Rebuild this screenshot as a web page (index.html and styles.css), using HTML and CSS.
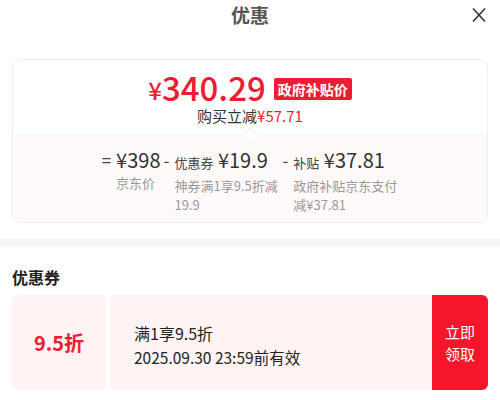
FILE: index.html
```html
<!DOCTYPE html>
<html lang="zh-CN">
<head>
  <meta charset="UTF-8">
  <meta name="viewport" content="width=device-width, initial-scale=1.0">
  <title>优惠</title>
  <link rel="stylesheet" href="styles.css">
</head>
<body>
  <header class="top-bar">
    <h1>优惠</h1>
    <svg class="close" width="16" height="16" viewBox="0 0 16 16">
      <path d="M2 1.5 L14 14.5 M14 1.5 L2 14.5" stroke="#333" stroke-width="1.6" fill="none"/>
    </svg>
  </header>

  <div class="price-card">
    <div class="price-main">
      <div class="price-line">
        <span class="yen">¥</span><span class="price">340.29</span>
        <span class="badge">政府补贴价</span>
      </div>
      <div class="save">购买立减<span class="red">¥57.71</span></div>
    </div>
    <div class="price-detail">
      <div class="col">
        <span class="op">=</span>
        <div class="col-body">
          <div class="amount">¥398</div>
          <div class="label">京东价</div>
        </div>
      </div>
      <div class="col">
        <span class="op">-</span>
        <div class="col-body wide">
          <div class="amount"><small>优惠券</small> ¥19.9</div>
          <div class="label">神券满1享9.5折减19.9</div>
        </div>
      </div>
      <div class="col">
        <span class="op">-</span>
        <div class="col-body wide">
          <div class="amount"><small>补贴</small> ¥37.81</div>
          <div class="label">政府补贴京东支付减¥37.81</div>
        </div>
      </div>
    </div>
  </div>

  <div class="band"></div>

  <section class="coupons">
    <h2>优惠券</h2>
    <div class="coupon">
      <div class="coupon-left">9.5折</div>
      <div class="coupon-main">
        <div class="coupon-title">满1享9.5折</div>
        <div class="coupon-date">2025.09.30 23:59前有效</div>
      </div>
      <button class="coupon-btn">立即<br>领取</button>
    </div>
  </section>
</body>
</html>
```

FILE: styles.css
```css
body {
  margin: 0;
  font-family: "Noto Sans CJK SC", "Noto Sans", sans-serif;
  background: #fff;
  color: #222;
}
.top-bar {
  position: relative;
  height: 30px;
  text-align: center;
}
.top-bar h1 {
  margin: 0;
  font-size: 19px;
  line-height: 30px;
  font-weight: bold;
  color: #555;
}
.close {
  position: absolute;
  right: 13px;
  top: 7px;
}
.price-card {
  margin: 29px 12px 0;
  border: 1px solid #f1eeee;
  border-radius: 8px;
  overflow: hidden;
}
.price-main {
  position: relative;
  text-align: center;
  padding-top: 8px;
  height: 66px;
}
.price-main::after {
  content: "";
  position: absolute;
  left: 50%;
  bottom: -5px;
  width: 9px;
  height: 9px;
  margin-left: -5px;
  background: #fff;
  border-left: 1px solid #f6eeee;
  border-top: 1px solid #f6eeee;
  transform: rotate(45deg);
}
.price-line {
  display: flex;
  justify-content: center;
  align-items: center;
  height: 38px;
  color: #ec1c33;
}
.yen {
  font-size: 24px;
  line-height: 24px;
  margin-top: 6px;
  font-weight: 500;
}
.price {
  font-size: 33px;
  line-height: 38px;
  font-weight: 500;
}
.badge {
  margin-left: 8px;
  background: #ec1c33;
  color: #fff;
  font-size: 14px;
  font-weight: bold;
  line-height: 22px;
  padding: 0 4px;
  border-radius: 2px;
  margin-top: 3px;
}
.save {
  font-size: 15px;
  line-height: 20px;
  color: #333;
}
.red {
  color: #ec1c33;
}
.price-detail {
  background: #fffafa;
  display: flex;
  justify-content: center;
  gap: 3px;
  padding: 13px 0 8px;
}
.col {
  display: flex;
  gap: 5px;
}
.op {
  font-size: 17px;
  line-height: 26px;
  color: #444;
}
.amount {
  font-size: 20px;
  line-height: 26px;
  color: #333;
  white-space: nowrap;
}
.amount small {
  font-size: 13px;
  color: #444;
}
.label {
  font-size: 13px;
  line-height: 19px;
  color: #999;
}
.col-body.wide {
  width: 105px;
}
.band {
  height: 8px;
  background: #f6f7fb;
  margin-top: 16px;
}
.coupons {
  padding: 0 12px;
}
.coupons h2 {
  margin: 0;
  padding-top: 18px;
  font-size: 16px;
  line-height: 24px;
  font-weight: bold;
  color: #222;
}
.coupon {
  display: flex;
  height: 95px;
  margin-top: 6px;
  gap: 4px;
}
.coupon-left {
  position: relative;
  width: 94px;
  background: #fff3f4;
  border-radius: 6px 0 0 6px;
  display: flex;
  align-items: center;
  justify-content: center;
  font-size: 20px;
  font-weight: bold;
  color: #ec1c33;
}
.coupon-left::before,
.coupon-left::after {
  content: "";
  position: absolute;
  right: -6px;
  width: 8px;
  height: 8px;
  border-radius: 50%;
  background: #fff;
}
.coupon-left::before {
  top: -4px;
}
.coupon-left::after {
  bottom: -4px;
}
.coupon-main {
  flex: 1;
  background: #fff3f4;
  display: flex;
  flex-direction: column;
  justify-content: center;
  padding: 4px 0 0 24px;
  color: #222;
}
.coupon-title {
  font-size: 16px;
  line-height: 24px;
}
.coupon-date {
  font-size: 15.5px;
  line-height: 24px;
}
.coupon-btn {
  width: 56px;
  margin-left: -4px;
  border: none;
  background: #f6152b;
  color: #fff;
  font-family: inherit;
  font-size: 15px;
  line-height: 22px;
  border-radius: 0 6px 6px 0;
  padding: 0;
}
```
